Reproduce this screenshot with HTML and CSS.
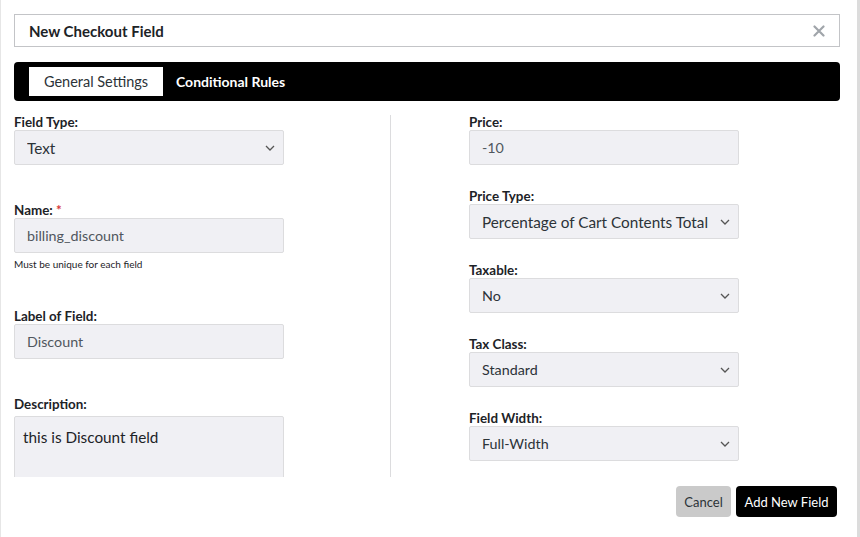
FILE: index.html
```html
<!DOCTYPE html>
<html lang="en">
<head>
  <meta charset="UTF-8">
  <meta name="viewport" content="width=device-width, initial-scale=1.0">
  <title>New Checkout Field</title>
  <link rel="stylesheet" href="styles.css">
</head>
<body>
  <div class="modal">
    <div class="modal-head">
      <h2 class="modal-title">New Checkout Field</h2>
      <svg class="modal-close" width="12" height="12" viewBox="0 0 12 12"><path d="M1.5 1.5l9 9M10.5 1.5l-9 9" stroke="#a0a5aa" stroke-width="2.2" stroke-linecap="round"/></svg>
    </div>

    <div class="tabs">
      <span class="tab active">General Settings</span>
      <span class="tab">Conditional Rules</span>
    </div>

    <div class="content">
      <div class="col col-left">
        <div class="group">
          <label class="label">Field Type:</label>
          <div class="select-wrap">
            <select class="field select big"><option>Text</option></select>
            <svg class="chev" width="10" height="6" viewBox="0 0 10 6"><path d="M1 1l4 4 4-4" fill="none" stroke="#555" stroke-width="1.3"/></svg>
          </div>
        </div>

        <div class="group">
          <label class="label">Name: <span class="req">*</span></label>
          <input class="field muted" type="text" value="billing_discount">
          <p class="help">Must be unique for each field</p>
        </div>

        <div class="group">
          <label class="label">Label of Field:</label>
          <input class="field muted" type="text" value="Discount">
        </div>

        <div class="group">
          <label class="label">Description:</label>
          <textarea class="field area">this is Discount field</textarea>
        </div>
      </div>

      <div class="col col-right">
        <div class="group">
          <label class="label">Price:</label>
          <input class="field muted" type="text" value="-10">
        </div>

        <div class="group">
          <label class="label">Price Type:</label>
          <div class="select-wrap">
            <select class="field select big"><option>Percentage of Cart Contents Total</option></select>
            <svg class="chev" width="10" height="6" viewBox="0 0 10 6"><path d="M1 1l4 4 4-4" fill="none" stroke="#555" stroke-width="1.3"/></svg>
          </div>
        </div>

        <div class="group">
          <label class="label">Taxable:</label>
          <div class="select-wrap">
            <select class="field select"><option>No</option></select>
            <svg class="chev" width="10" height="6" viewBox="0 0 10 6"><path d="M1 1l4 4 4-4" fill="none" stroke="#555" stroke-width="1.3"/></svg>
          </div>
        </div>

        <div class="group">
          <label class="label">Tax Class:</label>
          <div class="select-wrap">
            <select class="field select"><option>Standard</option></select>
            <svg class="chev" width="10" height="6" viewBox="0 0 10 6"><path d="M1 1l4 4 4-4" fill="none" stroke="#555" stroke-width="1.3"/></svg>
          </div>
        </div>

        <div class="group">
          <label class="label">Field Width:</label>
          <div class="select-wrap">
            <select class="field select"><option>Full-Width</option></select>
            <svg class="chev" width="10" height="6" viewBox="0 0 10 6"><path d="M1 1l4 4 4-4" fill="none" stroke="#555" stroke-width="1.3"/></svg>
          </div>
        </div>
      </div>
    </div>

    <div class="modal-foot">
      <button class="btn btn-cancel">Cancel</button>
      <button class="btn btn-add">Add New Field</button>
    </div>
  </div>
</body>
</html>
```

FILE: styles.css
```css
* {margin:0; padding:0; box-sizing: border-box;}
body {
  font-family: Lato, "Open Sans", sans-serif;
  color: #1d2327;
  background: #fff;
}
.modal{
  position: relative;
  width: 860px;
  height: 537px;
  border-left: 1px solid #e6e6e6;
  border-right: 3px solid #dcdcdc;
  padding: 14px 17px 0 13px;
  overflow: hidden;
}

/* header */
.modal-head{
  height: 33px;
  border: 1px solid #c3c4c7;
  display: flex;
  justify-content: space-between;
  align-items: center;
  padding: 0 14px 0 14px;
}
.modal-title{
  font-size: 15px;
  font-weight: 700;
  color: #1d2327;
}

/* tabs */
.tabs{
  margin-top: 15px;
  height: 39px;
  background-color: #000;
  border-radius: 4px;
  display: flex;
  align-items: center;
  padding: 0 15px;
}
.tab{
  font-size: 14px;
  font-weight: 700;
  color: #fff;
  padding: 0 13px;
  line-height: 29px;
}
.tab.active{
  width: 134px;
  background: #fff;
  color: #2c3338;
  font-weight: 400;
  font-size: 14.5px;
  text-align: center;
}

/* body */
.content{
  height: 376px;
  overflow: hidden;
  display: flex;
  padding-top: 14px;
}
.col-left{
  width: 377px;
  border-right: 1px solid #dcdcde;
}
.col-right{
  padding-left: 78px;
}
.col-left .group{margin-bottom: 38px;}
.col-right .group{margin-bottom: 24px;}

.label{
  display: block;
  font-size: 13.4px;
  font-weight: 700;
  line-height: 15px;
  color: #1d2327;
}
.req{color: #d63638;}

.field{
  display: block;
  width: 270px;
  height: 35px;
  background: #f0f0f4;
  border: 1px solid #dcdcde;
  border-radius: 2px;
  padding: 0 12px;
  font-family: Lato, "Open Sans", sans-serif;
  font-size: 14.3px;
  color: #2c3338;
  outline: none;
}
.muted{color: #50575e;}
.big{font-size: 15.3px;}
.area{
  height: 80px;
  margin-top: 4px;
  padding: 11px 8px;
  font-size: 15.3px;
  line-height: 18px;
  resize: none;
  color: #1d2327;
}
.help{
  margin-top: 5px;
  font-size: 10px;
  line-height: 13px;
  color: #1d2327;
}

.select-wrap{position: relative; width: 270px;}
.select{
  appearance: none;
  -webkit-appearance: none;
  padding-right: 30px;
}
.chev{
  position: absolute;
  right: 9px;
  top: 15px;
  pointer-events: none;
}

/* footer */
.modal-foot{
  display: flex;
  justify-content: flex-end;
  gap: 5px;
  padding: 9px 3px 0 0;
}
.btn{
  height: 31px;
  border: none;
  border-radius: 4px;
  font-family: Lato, "Open Sans", sans-serif;
  font-size: 13px;
  padding: 0;
}
.btn-cancel{
  width: 55px;
  background: #cacaca;
  color: #2c3338;
}
.btn-add{
  width: 101px;
  background: #000;
  color: #fff;
}

/* scroll marker on the right edge */
.modal::after{
  content: "";
  position: absolute;
  right: -3px;
  top: 370px;
  width: 3px;
  height: 2px;
  background: #8a9aa6;
}
```
